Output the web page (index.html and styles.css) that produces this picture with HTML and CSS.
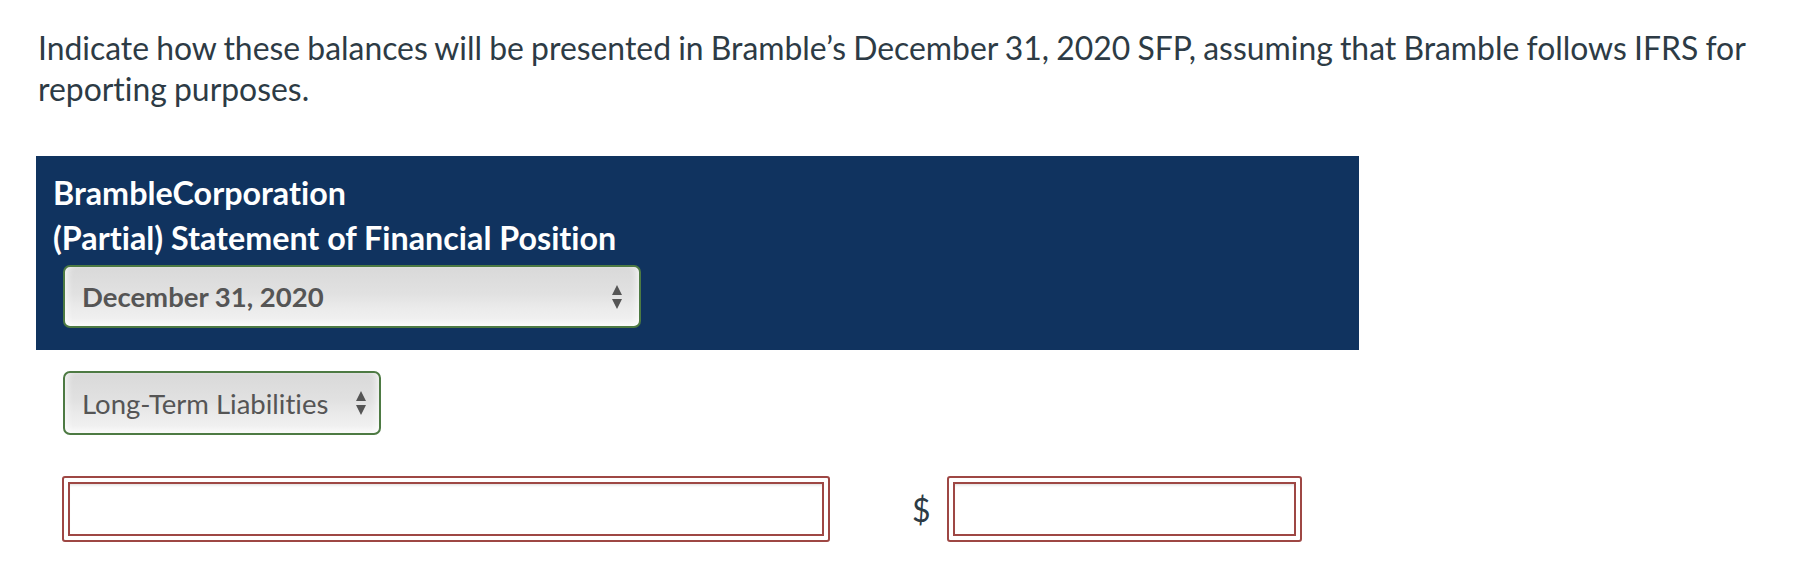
FILE: index.html
```html
<!DOCTYPE html>
<html lang="en">
<head>
<meta charset="utf-8">
<title>Bramble SFP</title>
<link rel="stylesheet" href="styles.css">
</head>
<body>
<p class="prompt">Indicate how these balances will be presented in Bramble’s December 31, 2020 SFP, assuming that Bramble follows IFRS for reporting purposes.</p>

<div class="header-box">
  <div class="title">BrambleCorporation</div>
  <div class="title">(Partial) Statement of Financial Position</div>
  <div class="select select-date">
    <span class="select-text">December 31, 2020</span>
    <svg class="arrows" width="10" height="24" viewBox="0 0 10 24"><path d="M5 0 L10 10 L0 10 Z M0 14 L10 14 L5 24 Z" fill="#555"/></svg>
  </div>
</div>

<div class="section-row">
  <div class="select select-section">
    <span class="select-text regular">Long-Term Liabilities</span>
    <svg class="arrows" width="10" height="24" viewBox="0 0 10 24"><path d="M5 0 L10 10 L0 10 Z M0 14 L10 14 L5 24 Z" fill="#555"/></svg>
  </div>
</div>

<div class="entry-row">
  <div class="field field-wide"><div class="field-inner"></div></div>
  <span class="dollar">$</span>
  <div class="field field-amount"><div class="field-inner"></div></div>
</div>
</body>
</html>
```

FILE: styles.css
```css
* { box-sizing: border-box; }
html, body { margin: 0; padding: 0; background: #fff; }
body {
  font-family: Lato, "Open Sans", sans-serif;
  color: #2d3b45;
  font-variant-ligatures: no-common-ligatures;
}
.prompt {
  margin: 0;
  padding: 28px 8px 0 38px;
  font-size: 31.9px;
  word-spacing: -1px;
  line-height: 41px;
}
.header-box {
  margin: 46px 0 0 36px;
  width: 1323px;
  height: 194px;
  background: #10335f;
  padding: 14px 0 0 17px;
}
.title {
  color: #fff;
  font-weight: bold;
  font-size: 32.25px;
  line-height: 45px;
}
.select {
  display: flex;
  align-items: center;
  justify-content: space-between;
  border: 2px solid #4d7a43;
  border-radius: 7px;
  background: linear-gradient(#d9d9d9, #e1e1e1 45%, #ebebeb 70%, #f3f3f3);
  box-shadow: inset 6px 0 6px -3px rgba(255,255,255,.6), inset -6px 0 6px -3px rgba(255,255,255,.6), inset 0 -6px 6px -3px rgba(255,255,255,.7);
  padding: 0 17px 0 17px;
}
.select-date {
  margin: 5px 0 0 10px;
  width: 578px;
  height: 63px;
}
.select-text {
  color: #555;
  font-size: 27.5px;
  font-weight: bold;
}
.select-text.regular { font-weight: normal; }
.section-row { padding: 21px 0 0 63px; }
.select-section {
  width: 318px;
  height: 64px;
  padding-right: 13px;
}
.entry-row {
  display: flex;
  align-items: center;
  padding: 41px 0 0 62px;
}
.field {
  border: 2px solid #9e4744;
  border-radius: 3px;
  padding: 4px;
  height: 66px;
}
.field-inner {
  height: 100%;
  border: 2px solid #9e4744;
  background: #fff;
  box-shadow: inset 0 3px 3px -2px rgba(0,0,0,.15);
}
.field-wide { width: 768px; }
.field-amount { width: 355px; }
.dollar {
  font-size: 32px;
  margin: 0 16px 0 82px;
}
```
